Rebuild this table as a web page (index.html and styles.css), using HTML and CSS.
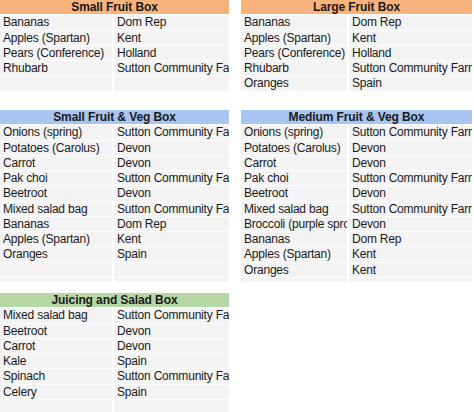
FILE: index.html
```html
<!DOCTYPE html>
<html>
<head>
<meta charset="utf-8">
<link rel="stylesheet" href="styles.css">
</head>
<body>
<div class="page">
  <div class="side side-left">
    <section class="box box-a">
      <div class="head orange">Small Fruit Box</div>
      <div class="rows">
        <div class="c">Bananas</div><div class="c">Dom Rep</div>
        <div class="c">Apples (Spartan)</div><div class="c">Kent</div>
        <div class="c">Pears (Conference)</div><div class="c">Holland</div>
        <div class="c">Rhubarb</div><div class="c">Sutton Community Farm</div>
        <div class="c"></div><div class="c"></div>
      </div>
    </section>
    <section class="box box-b">
      <div class="head blue">Small Fruit &amp; Veg Box</div>
      <div class="rows">
        <div class="c">Onions (spring)</div><div class="c">Sutton Community Farm</div>
        <div class="c">Potatoes (Carolus)</div><div class="c">Devon</div>
        <div class="c">Carrot</div><div class="c">Devon</div>
        <div class="c">Pak choi</div><div class="c">Sutton Community Farm</div>
        <div class="c">Beetroot</div><div class="c">Devon</div>
        <div class="c">Mixed salad bag</div><div class="c">Sutton Community Farm</div>
        <div class="c">Bananas</div><div class="c">Dom Rep</div>
        <div class="c">Apples (Spartan)</div><div class="c">Kent</div>
        <div class="c">Oranges</div><div class="c">Spain</div>
        <div class="c"></div><div class="c"></div>
        <div class="c strip"></div><div class="c strip"></div>
      </div>
    </section>
    <section class="box box-c">
      <div class="head green">Juicing and Salad Box</div>
      <div class="rows">
        <div class="c">Mixed salad bag</div><div class="c">Sutton Community Farm</div>
        <div class="c">Beetroot</div><div class="c">Devon</div>
        <div class="c">Carrot</div><div class="c">Devon</div>
        <div class="c">Kale</div><div class="c">Spain</div>
        <div class="c">Spinach</div><div class="c">Sutton Community Farm</div>
        <div class="c">Celery</div><div class="c">Spain</div>
        <div class="c"></div><div class="c"></div>
      </div>
    </section>
  </div>
  <div class="side side-right">
    <section class="box box-a">
      <div class="head orange">Large Fruit Box</div>
      <div class="rows">
        <div class="c">Bananas</div><div class="c">Dom Rep</div>
        <div class="c">Apples (Spartan)</div><div class="c">Kent</div>
        <div class="c">Pears (Conference)</div><div class="c">Holland</div>
        <div class="c">Rhubarb</div><div class="c">Sutton Community Farm</div>
        <div class="c">Oranges</div><div class="c">Spain</div>
      </div>
    </section>
    <section class="box box-b">
      <div class="head blue">Medium Fruit &amp; Veg Box</div>
      <div class="rows">
        <div class="c">Onions (spring)</div><div class="c">Sutton Community Farm</div>
        <div class="c">Potatoes (Carolus)</div><div class="c">Devon</div>
        <div class="c">Carrot</div><div class="c">Devon</div>
        <div class="c">Pak choi</div><div class="c">Sutton Community Farm</div>
        <div class="c">Beetroot</div><div class="c">Devon</div>
        <div class="c">Mixed salad bag</div><div class="c">Sutton Community Farm</div>
        <div class="c">Broccoli (purple sprouting)</div><div class="c">Devon</div>
        <div class="c">Bananas</div><div class="c">Dom Rep</div>
        <div class="c">Apples (Spartan)</div><div class="c">Kent</div>
        <div class="c">Oranges</div><div class="c">Kent</div>
        <div class="c strip"></div><div class="c strip"></div>
      </div>
    </section>
  </div>
</div>
</body>
</html>
```
FILE: styles.css
```css
html, body {
  margin: 0;
  padding: 0;
  background: #ffffff;
}
body {
  font-family: "Liberation Sans", Arial, Helvetica, sans-serif;
  font-size: 12px;
  letter-spacing: -0.2px;
  color: #1a1a1a;
  overflow: hidden;
  width: 474px;
  height: 412px;
}
.page {
  display: grid;
  grid-template-columns: 229px 231px;
  column-gap: 12px;
  align-items: start;
}
.side {
  display: flex;
  flex-direction: column;
}
.box-a { height: 110px; }
.box-b { height: 183px; }
.head {
  height: 14.25px;
  line-height: 15px;
  text-align: center;
  font-weight: bold;
  letter-spacing: -0.1px;
  margin-bottom: 1px;
  overflow: hidden;
  white-space: nowrap;
}
.orange { background: #f8b27c; }
.blue { background: #a8c4f1; }
.green { background: #b5d7a6; }
.rows {
  display: grid;
  row-gap: 1px;
  column-gap: 2px;
}
.side-left .rows { grid-template-columns: 112px 115px; }
.side-right .rows { grid-template-columns: 106px 123px; }
.c {
  height: 14.25px;
  background: #f3f3f3;
  padding-left: 3px;
  line-height: 15px;
  white-space: nowrap;
  overflow: hidden;
  text-overflow: clip;
}
.c.strip {
  height: 4px;
}
```
